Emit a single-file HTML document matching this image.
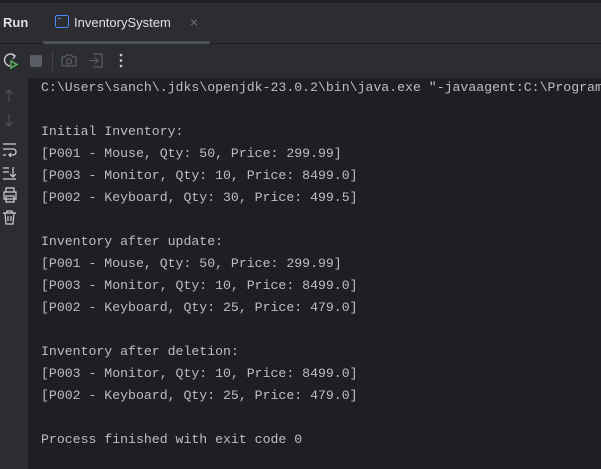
<!DOCTYPE html>
<html><head><meta charset="utf-8"><style>
*{margin:0;padding:0;box-sizing:border-box}
body{width:601px;height:469px;overflow:hidden;background:#2b2d30;position:relative;font-family:"Liberation Sans",sans-serif}
.top{position:absolute;left:0;top:0;width:601px;height:3px;background:#1e1f22}
.hdr{position:absolute;left:0;top:3px;width:601px;height:40px;background:#2b2d30}
.sep{position:absolute;left:0;top:43px;width:601px;height:1px;background:#1e1f22}
.uline{position:absolute;left:43px;top:41px;width:167px;height:3px;background:#4e5157;border-radius:2px}
.run{position:absolute;left:3px;top:15px;color:#dfe1e5;font-size:13px;font-weight:bold}
.tab{position:absolute;left:74px;top:15px;color:#dfe1e5;font-size:13px}
.x{position:absolute;left:190px;top:14px;color:#6f737a;font-size:14px}
.con{position:absolute;left:28px;top:78px;width:573px;height:391px;background:#1e1f22}
pre{position:absolute;left:41px;top:77px;font-family:"Liberation Mono",monospace;font-size:13.2px;line-height:22px;color:#bcbec4}
svg{position:absolute}
</style></head><body>
<div class="top"></div>
<div class="hdr"></div>
<div class="run">Run</div>
<svg style="left:55px;top:15px" width="14" height="13"><rect x="0.5" y="0.5" width="13" height="12" rx="2" fill="none" stroke="#548af7"/><line x1="3" y1="3.5" x2="6" y2="3.5" stroke="#548af7"/></svg>
<div class="tab">InventorySystem</div>
<div class="x">×</div>
<div class="sep"></div>
<div class="uline"></div>
<svg style="left:2px;top:52px" width="18" height="18"><path d="M13 4 A6 6 0 1 0 8 14" fill="none" stroke="#ced0d6" stroke-width="1.4"/><path d="M10 2 L13 4 L11 7" fill="none" stroke="#ced0d6" stroke-width="1.4"/><path d="M9 9 L15 12.5 L9 16 Z" fill="none" stroke="#5fb865" stroke-width="1.4"/></svg>
<div style="position:absolute;left:30px;top:55px;width:12px;height:12px;background:#5a5d63;border-radius:2px"></div>
<div style="position:absolute;left:52px;top:51px;width:1px;height:20px;background:#43454a"></div>
<svg style="left:61px;top:53px" width="16" height="15"><path d="M1 4 H4 L5.5 2 H10.5 L12 4 H15 V13 H1 Z" fill="none" stroke="#5a5d63" stroke-width="1.2"/><circle cx="8" cy="8.5" r="2.5" fill="none" stroke="#5a5d63" stroke-width="1.2"/></svg>
<svg style="left:88px;top:53px" width="16" height="15"><path d="M5 1 H14 V14 H5 M1 7.5 H10 M7 4.5 L10 7.5 L7 10.5" fill="none" stroke="#5a5d63" stroke-width="1.2"/></svg>
<svg style="left:119px;top:53px" width="4" height="15"><circle cx="2" cy="2" r="1.3" fill="#ced0d6"/><circle cx="2" cy="7.5" r="1.3" fill="#ced0d6"/><circle cx="2" cy="13" r="1.3" fill="#ced0d6"/></svg>
<div class="con"></div>
<svg style="left:3px;top:88px" width="14" height="150" fill="none" stroke-width="1.2">
<path d="M6 2 V14 M2 6 L6 2 L10 6" stroke="#4e5157"/>
<path d="M6 26 V38 M2 34 L6 38 L10 34" stroke="#4e5157"/>
<path d="M0 56 H13 M0 61 H10 Q13 61 13 64 Q13 67 10 67 H6 M8 65 L6 67 L8 69 M0 67 H3" stroke="#ced0d6"/>
<path d="M0 80 H6 M0 84 H6 M0 91 H13 M10 79 V89 M7 86 L10 89 L13 86" stroke="#ced0d6"/>
<path d="M3 104 V100 H11 V104 M1 104 H13 V111 H1 Z M3 108 H11 V114 H3 Z" stroke="#ced0d6"/>
<path d="M0 125 H13 M4 125 V123 H9 V125 M2 125 L3 136 H10 L11 125 M5 128 V133 M8 128 V133" stroke="#ced0d6"/>
</svg>
<pre>C:\Users\sanch\.jdks\openjdk-23.0.2\bin\java.exe "-javaagent:C:\Program

Initial Inventory:
[P001 - Mouse, Qty: 50, Price: 299.99]
[P003 - Monitor, Qty: 10, Price: 8499.0]
[P002 - Keyboard, Qty: 30, Price: 499.5]

Inventory after update:
[P001 - Mouse, Qty: 50, Price: 299.99]
[P003 - Monitor, Qty: 10, Price: 8499.0]
[P002 - Keyboard, Qty: 25, Price: 479.0]

Inventory after deletion:
[P003 - Monitor, Qty: 10, Price: 8499.0]
[P002 - Keyboard, Qty: 25, Price: 479.0]

Process finished with exit code 0</pre>
</body></html>
